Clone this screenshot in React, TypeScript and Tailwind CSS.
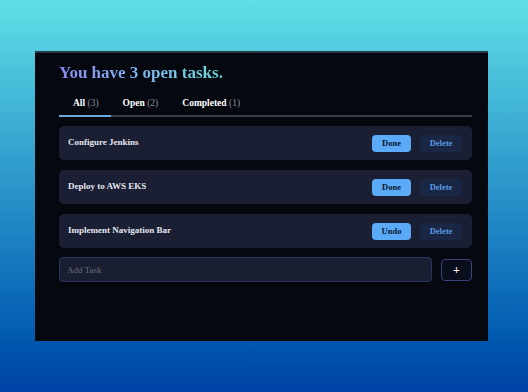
import React, { useState } from 'react';

type Task = { id: number; title: string; done: boolean };

const initialTasks: Task[] = [
  { id: 1, title: 'Configure Jenkins', done: false },
  { id: 2, title: 'Deploy to AWS EKS', done: false },
  { id: 3, title: 'Implement Navigation Bar', done: true },
];

export default function App() {
  const [tasks, setTasks] = useState<Task[]>(initialTasks);
  const [tab, setTab] = useState<'all' | 'open' | 'completed'>('all');
  const [text, setText] = useState('');

  const open = tasks.filter((t) => !t.done).length;
  const completed = tasks.length - open;
  const visible = tasks.filter((t) => (tab === 'all' ? true : tab === 'open' ? !t.done : t.done));

  const addTask = () => {
    if (!text.trim()) return;
    setTasks([...tasks, { id: Date.now(), title: text, done: false }]);
    setText('');
  };

  const tabs = [
    { key: 'all' as const, label: 'All', count: tasks.length },
    { key: 'open' as const, label: 'Open', count: open },
    { key: 'completed' as const, label: 'Completed', count: completed },
  ];

  return (
    <div
      className="w-[528px] h-[392px] flex items-start pl-[35px] pt-[51px] bg-gradient-to-b from-[#60dfe6] to-[#0043a6]"
      style={{ fontFamily: '"Liberation Serif", "DejaVu Serif", serif' }}
    >
      {/* Card */}
      <div className="w-[453px] h-[290px] bg-[#05080f] border-t-2 border-[#2b3a48] pl-6 pt-2">
        <div className="w-[413px]">
          <h1 className="text-[17px] font-bold leading-6 bg-gradient-to-r from-[#8a8af4] to-[#66dde0] bg-clip-text text-transparent w-fit">
            You have {tasks.length} open tasks.
          </h1>

          {/* Tabs */}
          <nav className="mt-3 flex border-b-2 border-[#3a3d44]">
            {tabs.map((t) => (
              <button
                key={t.key}
                onClick={() => setTab(t.key)}
                className={
                  tab === t.key
                    ? '-mb-[2px] pl-[14px] pr-[12px] pt-0 pb-[6px] text-[9.5px] leading-[12px] font-bold text-white border-b-2 border-[#6fa8dc]'
                    : 'px-[12px] pt-0 pb-[6px] text-[9.5px] leading-[12px] font-bold text-white'
                }
              >
                {t.label} <span className="font-normal text-[#8a8f99]">({t.count})</span>
              </button>
            ))}
          </nav>

          {/* Task rows */}
          <div className="mt-[9px] flex flex-col gap-[10px]">
            {visible.map((task) => (
              <div
                key={task.id}
                className="h-[34px] flex items-center justify-between rounded-[5px] bg-[#1a1f33] pl-[9px] pr-[10px]"
              >
                <span className="text-[9px] font-bold text-[#e6e6ee]">{task.title}</span>
                <div className="flex items-center gap-[9px]">
                  <button
                    onClick={() => setTasks(tasks.map((t) => (t.id === task.id ? { ...t, done: !t.done } : t)))}
                    className="w-[39px] h-[17px] rounded-[4px] bg-[#5aaaf7] text-[8.5px] font-bold text-[#0b1630]"
                  >
                    {task.done ? 'Undo' : 'Done'}
                  </button>
                  <button
                    onClick={() => setTasks(tasks.filter((t) => t.id !== task.id))}
                    className="w-[42px] h-[17px] rounded-[4px] bg-[#1a2744] text-[8.5px] font-bold text-[#5b9de6]"
                  >
                    Delete
                  </button>
                </div>
              </div>
            ))}
          </div>

          {/* Add task */}
          <div className="mt-[9px] flex items-center gap-[9px]">
            <input
              value={text}
              onChange={(e) => setText(e.target.value)}
              onKeyDown={(e) => e.key === 'Enter' && addTask()}
              placeholder="Add Task"
              className="w-[373px] h-[25px] rounded-[4px] bg-[#191e31] border border-[#2b3460] px-[7px] text-[9px] text-white placeholder:text-[#6b6f7c] outline-none"
            />
            <button
              onClick={addTask}
              className="w-[31px] h-[22px] rounded-[4px] border border-[#3a4580] bg-[#0a0e1c] text-[12px] font-bold text-white leading-none"
            >
              +
            </button>
          </div>
        </div>
      </div>
    </div>
  );
}
